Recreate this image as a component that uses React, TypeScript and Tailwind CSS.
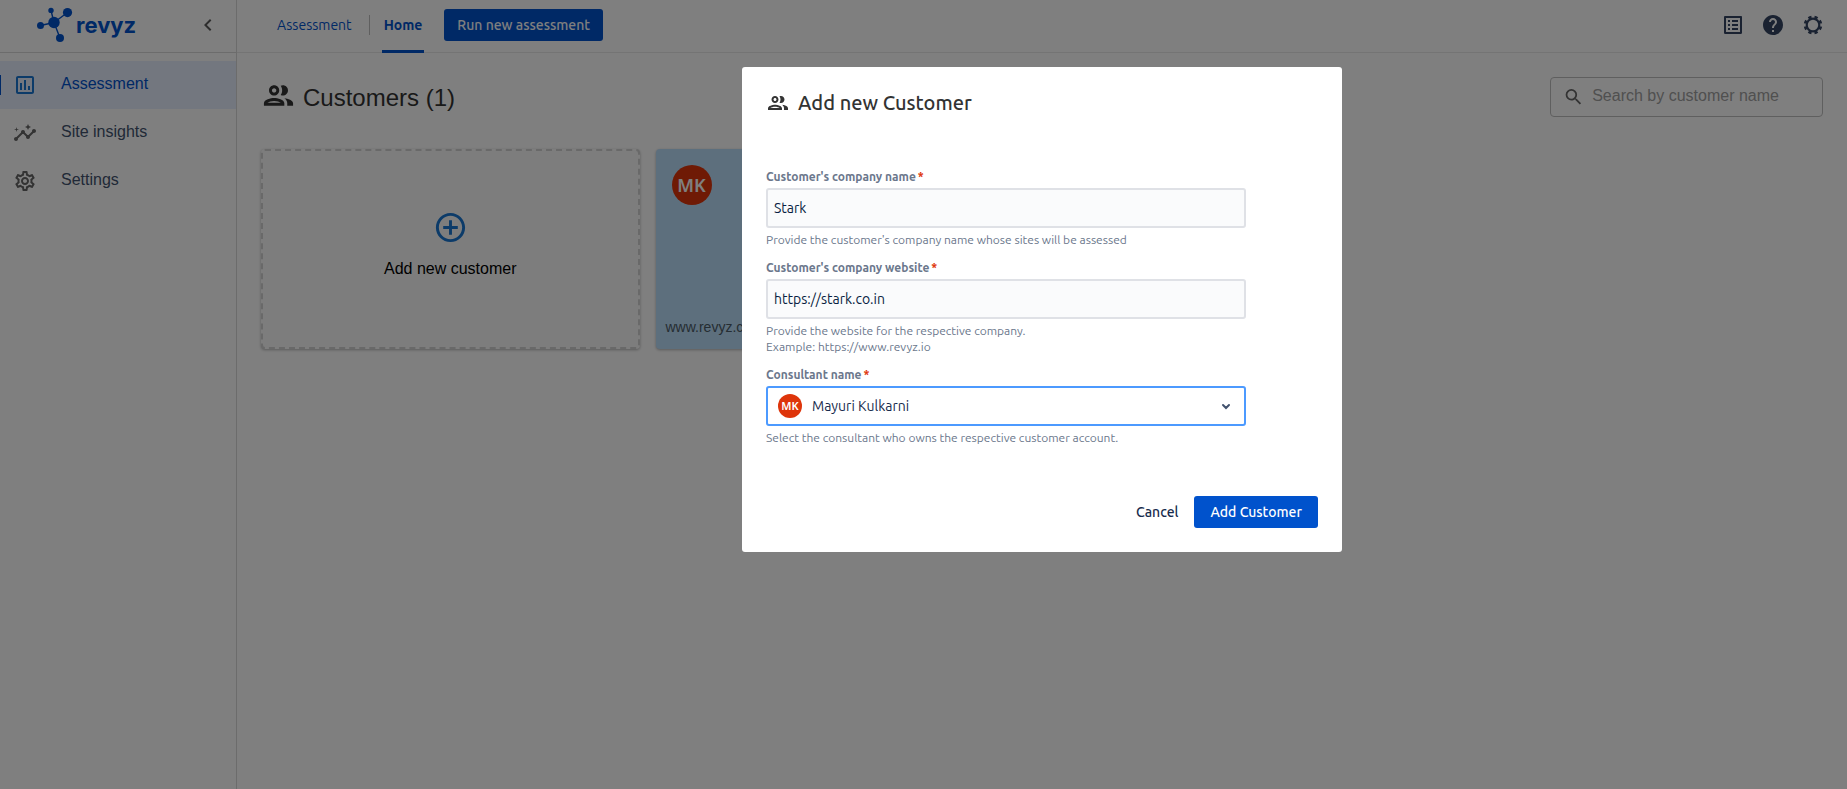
import type { ReactNode } from 'react'
import {
  MdAddCircleOutline,
  MdChevronLeft,
  MdHelp,
  MdInsights,
  MdOutlineAssessment,
  MdOutlineListAlt,
  MdOutlinePeople,
  MdOutlineSettings,
  MdSearch,
} from 'react-icons/md'

const uiFont = "font-['Ubuntu','Noto_Sans',sans-serif]"

const navItems = [
  { label: 'Assessment', icon: MdOutlineAssessment, active: true },
  { label: 'Site insights', icon: MdInsights, active: false },
  { label: 'Settings', icon: MdOutlineSettings, active: false },
]

function Logo() {
  return (
    <a href="#" className="flex items-center gap-[3px] text-[#0052cc]" aria-label="revyz home">
      <svg width="36" height="36" viewBox="0 0 36 36" fill="currentColor" aria-hidden>
        <path
          d="M17 15.5 30.5 5.5M17 15.5 14 3.5M17 15.5 3.5 18.5M17 15.5 23 31"
          stroke="currentColor"
          strokeWidth="1.4"
        />
        <circle cx="17" cy="15.5" r="5.7" />
        <circle cx="30.5" cy="5.6" r="4.6" />
        <circle cx="14" cy="3.4" r="2.7" />
        <circle cx="3.5" cy="18.4" r="3.5" />
        <circle cx="23" cy="31" r="4" />
      </svg>
      <span className="font-['Inter',sans-serif] text-[22px] font-bold leading-6">revyz</span>
    </a>
  )
}

function CogIcon() {
  return (
    <svg width="24" height="24" viewBox="0 0 24 24" fill="none" stroke="currentColor" aria-hidden>
      <circle cx="12" cy="12" r="6.3" strokeWidth="2.2" />
      <circle
        cx="12"
        cy="12"
        r="8"
        strokeWidth="2.6"
        pathLength="80"
        strokeDasharray="5.2 4.8"
        strokeDashoffset="-2.4"
      />
    </svg>
  )
}

function Sidebar() {
  return (
    <aside className="w-[237px] shrink-0 border-r border-[#d8d8d8]">
      <div className="flex h-[53px] items-start justify-between border-b border-[#d8d8d8] pt-[7px] pr-4 pl-[37px]">
        <Logo />
        <button type="button" aria-label="Collapse menu" className="mt-1.5 text-[#5c5c5c]">
          <MdChevronLeft className="size-6" />
        </button>
      </div>
      <nav className="pt-2">
        {navItems.map(({ label, icon: Icon, active }) => (
          <a
            key={label}
            href="#"
            className={
              active
                ? 'relative flex h-12 items-center bg-[#e6eeff] pl-[13px] text-[#0052cc]'
                : 'flex h-12 items-center pl-[13px] text-[#42526e]'
            }
          >
            {active && <span className="absolute left-0 h-5 w-px bg-[#0052cc]" />}
            <Icon className={active ? 'size-6 text-[#1976d2]' : 'size-6 text-[#666666]'} />
            <span className="pb-0.5 pl-6">{label}</span>
          </a>
        ))}
      </nav>
    </aside>
  )
}

function TopBar() {
  return (
    <header
      className={`flex h-[53px] items-center justify-between border-b border-[#e8e8e8] pr-[22px] pb-0.5 pl-10 text-sm font-medium ${uiFont}`}
    >
      <nav className="flex h-full items-center text-[#0052cc]">
        <a href="#" className="font-normal">
          Assessment
        </a>
        <span className="ml-[17px] h-5 w-px bg-[#bfbfbf]" />
        <a href="#" className="relative ml-3 flex h-full items-center px-0.5 font-semibold">
          Home
          <span className="absolute inset-x-0 -bottom-[3px] h-[3px] bg-[#0052cc]" />
        </a>
        <button type="button" className="ml-5 h-8 rounded-[3px] bg-[#0052cc] px-[13px] text-white">
          Run new assessment
        </button>
      </nav>
      <div className="flex items-center gap-4 text-[#344563]">
        <button type="button" aria-label="Release notes">
          <MdOutlineListAlt className="size-6" />
        </button>
        <button type="button" aria-label="Help">
          <MdHelp className="size-6" />
        </button>
        <button type="button" aria-label="Settings">
          <CogIcon />
        </button>
      </div>
    </header>
  )
}

function Customers() {
  return (
    <main className="px-6 pt-6">
      <div className="flex items-center justify-between">
        <h1 className="flex items-center gap-[7px] text-2xl text-[#333333]">
          <MdOutlinePeople className="mb-1 size-[35px]" />
          <span className="pt-0.5">Customers (1)</span>
        </h1>
        <label className="flex h-10 w-[273px] items-center gap-2 rounded border border-[#bfbfbf] px-3">
          <MdSearch className="size-6 text-[#666666]" />
          <input
            type="search"
            aria-label="Search by customer name"
            placeholder="Search by customer name"
            className="w-full min-w-0 pb-0.5 outline-none placeholder:text-[#a0a0a0]"
          />
        </label>
      </div>
      <div className="mt-8 grid grid-cols-4 gap-4">
        <button
          type="button"
          className="flex h-[200px] flex-col items-center justify-center gap-3 rounded border-2 border-dashed border-[#d3d3d3] bg-[#fafafa] pb-2 text-black shadow-[0_1px_3px_rgba(0,0,0,0.3)]"
        >
          <MdAddCircleOutline className="size-[35px] text-[#1976d2]" />
          Add new customer
        </button>
        <article className="flex h-[200px] flex-col justify-between rounded bg-[#bbdefb] px-2.5 pt-4 pb-3 shadow-[0_1px_3px_rgba(0,0,0,0.3)]">
          <span className="ml-1.5 flex size-10 items-center justify-center rounded-full bg-[#de350b] font-['Noto_Sans',sans-serif] text-lg font-semibold text-white">
            MK
          </span>
          <span className="text-sm text-[#4a5a66]">www.revyz.com</span>
        </article>
      </div>
    </main>
  )
}

type FieldProps = { id: string; label: string; help: ReactNode; children: ReactNode }

function Field({ id, label, help, children }: FieldProps) {
  return (
    <div>
      <label htmlFor={id} className="block pt-px pb-[3px] text-xs leading-4 font-semibold text-[#6b778c]">
        {label}
        <span className="pl-0.5 text-[#de350b]">*</span>
      </label>
      {children}
      <p className="mt-1 text-xs leading-4 text-[#6b778c]">{help}</p>
    </div>
  )
}

const inputClass =
  'h-10 w-full rounded-[3px] border-2 border-[#dfe1e6] bg-[#fafbfc] px-1.5 text-sm text-[#091e42] outline-none'

function AddCustomerDialog() {
  return (
    <div className={`fixed inset-0 flex items-start justify-center bg-black/50 pt-[67px] pl-[237px] ${uiFont}`}>
      <form
        role="dialog"
        aria-modal="true"
        aria-labelledby="dialog-title"
        className="w-full max-w-[600px] rounded-[3px] bg-white p-6"
      >
        <h2 id="dialog-title" className="flex items-center gap-2 text-xl leading-6 font-medium text-[#333333]">
          <MdOutlinePeople className="size-6" />
          Add new Customer
        </h2>
        <div className="mt-[53px] flex max-w-[480px] flex-col gap-[11px]">
          <Field id="company" label="Customer's company name" help="Provide the customer's company name whose sites will be assessed">
            <input id="company" type="text" defaultValue="Stark" className={inputClass} />
          </Field>
          <Field
            id="website"
            label="Customer's company website"
            help={
              <>
                Provide the website for the respective company.
                <br />
                Example: https://www.revyz.io
              </>
            }
          >
            <input id="website" type="text" defaultValue="https://stark.co.in" className={inputClass} />
          </Field>
          <Field id="consultant" label="Consultant name" help="Select the consultant who owns the respective customer account.">
            <div className="relative">
              <select
                id="consultant"
                className="h-10 w-full appearance-none rounded-[3px] border-2 border-[#4c9aff] bg-white pl-11 text-sm text-[#172b4d] outline-none"
              >
                <option>Mayuri Kulkarni</option>
              </select>
              <span className="pointer-events-none absolute top-2 left-3 flex size-6 items-center justify-center rounded-full bg-[#de350b] font-['Noto_Sans',sans-serif] text-[11px] font-semibold text-white">
                MK
              </span>
              <svg
                className="pointer-events-none absolute top-2 right-2 text-[#42526e]"
                width="24"
                height="24"
                viewBox="0 0 24 24"
                fill="none"
                aria-hidden
              >
                <path d="m9 11 3 3 3-3" stroke="currentColor" strokeWidth="2" strokeLinecap="round" />
              </svg>
            </div>
          </Field>
        </div>
        <div className="mt-[50px] flex justify-end gap-1 text-sm font-medium">
          <button type="button" className="h-8 px-3 text-[#172b4d]">
            Cancel
          </button>
          <button type="submit" className="h-8 rounded-[3px] bg-[#0052cc] px-4 text-white">
            Add Customer
          </button>
        </div>
      </form>
    </div>
  )
}

export default function App() {
  return (
    <div className="flex min-h-screen bg-white font-['Liberation_Sans',Arial,sans-serif] text-base">
      <Sidebar />
      <div className="min-w-0 flex-1">
        <TopBar />
        <Customers />
      </div>
      <AddCustomerDialog />
    </div>
  )
}
